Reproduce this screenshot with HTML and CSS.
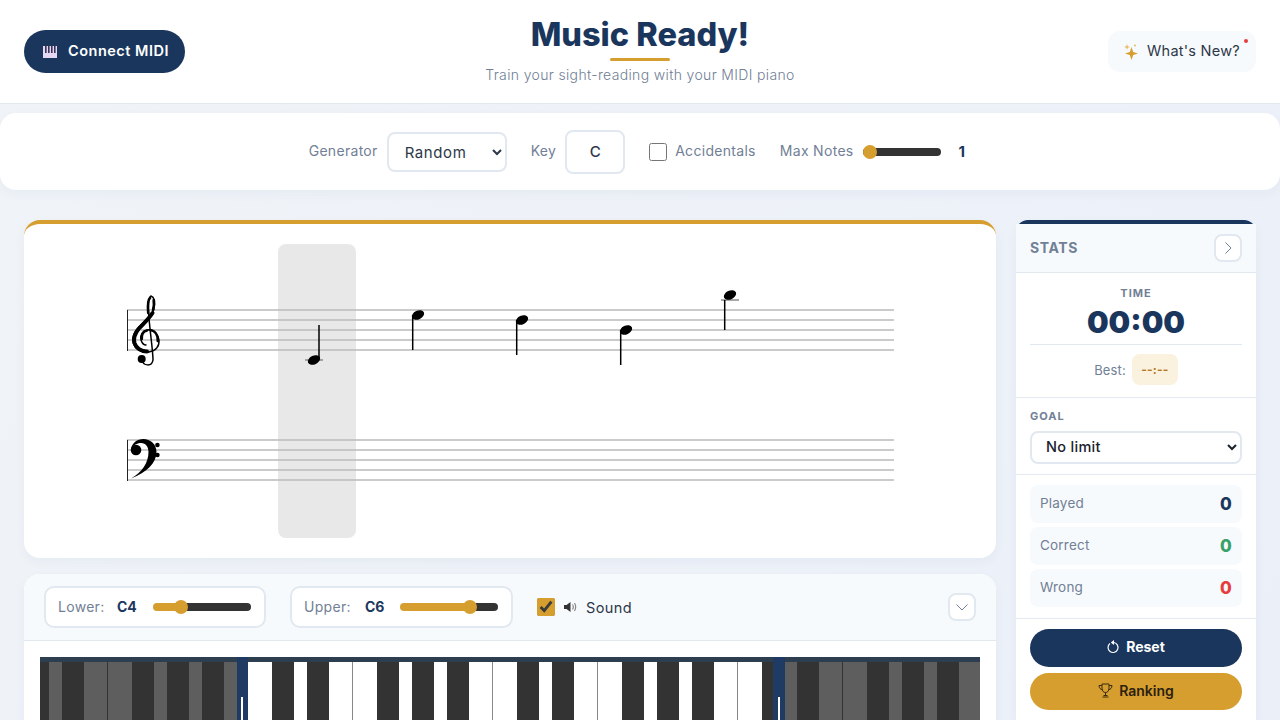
FILE: index.html
```html
<!DOCTYPE html>
<html lang="en">
<head>
    <meta charset="UTF-8">
    <title>Music Ready!</title>
    <link rel="stylesheet" href="styles.css">
</head>
<body>
    <header class="header">
        <div class="header-left">
            <button class="btn-midi">
                <svg class="midi-icon" width="14" height="12" viewBox="0 0 14 12">
                    <rect width="14" height="12" fill="#e6d8f2"/>
                    <rect x="2" y="0" width="1.6" height="7" fill="#3a3358"/>
                    <rect x="5" y="0" width="1.6" height="7" fill="#3a3358"/>
                    <rect x="8" y="0" width="1.6" height="7" fill="#3a3358"/>
                    <rect x="11" y="0" width="1.6" height="7" fill="#3a3358"/>
                </svg>
                <span>Connect MIDI</span>
            </button>
        </div>
        <div class="brand">
            <h1>Music Ready!</h1>
            <div class="brand-line"></div>
            <p>Train your sight-reading with your MIDI piano</p>
        </div>
        <div class="header-right">
            <button class="btn-news">
                <svg width="15" height="17" viewBox="0 0 15 17">
                    <path d="M7.500 4 L9.200 9 L14 10.500 L9.200 12 L7.500 17 L5.800 12 L1 10.500 L5.800 9 Z" fill="#d69e2e"/>
                    <path d="M3 1 L3.700 3.300 L6 4 L3.700 4.700 L3 7 L2.300 4.700 L0 4 L2.300 3.300 Z" fill="#e3b95c"/>
                    <circle cx="11" cy="2.500" r="1" fill="#e3b95c"/>
                </svg>
                <span>What's New?</span>
                <span class="news-dot"></span>
            </button>
        </div>
    </header>

    <section class="toolbar">
        <div class="tool">
            <label for="generator">Generator</label>
            <select id="generator" class="select-gen"><option>Random</option></select>
        </div>
        <div class="tool tool-key">
            <label for="key">Key</label>
            <input id="key" class="key-box" type="text" value="C">
        </div>
        <div class="tool tool-check">
            <input id="accidentals" type="checkbox">
            <label for="accidentals">Accidentals</label>
        </div>
        <div class="tool">
            <label for="maxNotes">Max Notes</label>
            <input id="maxNotes" class="slider slider-notes" type="range" min="1" max="10" value="1">
            <span class="tool-value">1</span>
        </div>
    </section>

    <main class="main">
        <div class="left-col">
            <section class="score-card">
                <svg class="score" width="972" height="334" viewBox="24 224 972 334">
                    <rect x="278" y="244" width="78" height="294" rx="8" fill="#000" fill-opacity="0.09"/>
                    <g class="staff-lines">
                        <path d="M127 310H894M127 320H894M127 330H894M127 340H894M127 350H894"/>
                        <path d="M127 440H894M127 450H894M127 460H894M127 470H894M127 480H894"/>
                    </g>
                    <path class="ledger" d="M305 360H323M721 300H739"/>
                    <path class="bar" d="M127.500 310V351M127.500 440V481"/>

                    <!-- treble clef -->
                    <g class="clef">
                        <path class="thin" d="M142 360C143 366 152 367 153 360C153 350 149 325 148.500 311C148 303 149 297 151 296C154.500 297 155 303 154 309C152 316 144 322 139 327C134 332 132 337 133 342C135 350 143 353 149 352C156 351 159.500 346 159 340C158 333 152 329 147 330C142 331 140 336 141 340C142 343 144 345 146 345"/>
                        <path class="thick" d="M152.500 313C148 320 142 325 138.500 329C134.500 334 133.500 339 134.500 343C136 348 141 351.500 147 351.500"/>
                        <path class="mid" d="M147 330.500C143 331 141.300 335 141.800 339M150 330C155 330.500 158 335 157.800 341"/>
                        <path class="mid" d="M150 298C147.500 300 147.700 307 148.200 313M153.700 300C154.300 304 154 307 153 310"/>
                        <circle cx="141.700" cy="359" r="4"/>
                    </g>

                    <!-- bass clef -->
                    <g class="clef-fill">
                        <path d="M131 478.500C147 472 156.500 463 156.500 452C156.500 444 150 439 143.500 439C137 439 132 443 131 449C134 444.500 138 443 141 443C146 443 148.500 447 148.500 452C148.500 463 142 472 131 478.500Z"/>
                        <circle cx="136" cy="450" r="5.300"/>
                        <circle cx="157.400" cy="445" r="2.300"/>
                        <circle cx="157.400" cy="455" r="2.300"/>
                    </g>

                    <!-- notes -->
                    <g class="notes">
                        <path class="stem" d="M319 325V358M412.700 315V350M516.700 320V355M620.700 330V365M724.700 300V330"/>
                        <ellipse cx="314" cy="360" rx="6.500" ry="4.300" transform="rotate(-25 314 360)"/>
                        <ellipse cx="418" cy="315" rx="6.500" ry="4.300" transform="rotate(-25 418 315)"/>
                        <ellipse cx="522" cy="320" rx="6.500" ry="4.300" transform="rotate(-25 522 320)"/>
                        <ellipse cx="626" cy="330" rx="6.500" ry="4.300" transform="rotate(-25 626 330)"/>
                        <ellipse cx="730" cy="295" rx="6.500" ry="4.300" transform="rotate(-25 730 295)"/>
                    </g>
                </svg>
            </section>

            <section class="piano-card">
                <div class="piano-head">
                    <div class="range-box">
                        <span class="range-label">Lower:</span>
                        <span class="range-value">C4</span>
                        <input class="slider" type="range" min="0" max="100" value="25" style="background: linear-gradient(to right, #d69e2e 29%, #333 29%)">
                    </div>
                    <div class="range-box range-upper">
                        <span class="range-label">Upper:</span>
                        <span class="range-value">C6</span>
                        <input class="slider" type="range" min="0" max="100" value="75" style="background: linear-gradient(to right, #d69e2e 71%, #333 71%)">
                    </div>
                    <label class="sound">
                        <input type="checkbox" checked>
                        <svg width="13" height="12" viewBox="0 0 13 12">
                            <path d="M0 4H2.500L6.500 1V11L2.500 8H0Z" fill="#333"/>
                            <path d="M8.500 3.500C9.500 5 9.500 7 8.500 8.500M10.500 2C12 4.500 12 7.500 10.500 10" fill="none" stroke="#888" stroke-width="1.200"/>
                        </svg>
                        <span>Sound</span>
                    </label>
                    <button class="chevron chevron-push">
                        <svg width="14" height="14" viewBox="0 0 14 14"><path d="M1.500 4.500L7 10L12.500 4.500"/></svg>
                    </button>
                </div>
                <div class="piano-body">
                    <svg width="940" height="70" viewBox="40 657 940 70">
                        <rect x="40" y="657" width="940" height="70" fill="#fff"/>
                        <!-- dim keys outside the selected range -->
                        <rect x="40" y="657" width="208" height="70" fill="#5e5e5e"/>
                        <rect x="773" y="657" width="207" height="70" fill="#5e5e5e"/>
                        <path class="key-line" d="M352.500 662V727M492.500 662V727M597.500 662V727M737.500 662V727"/>
                        <path class="key-line-dim" d="M107.500 662V727M842.500 662V727"/>
                        <g fill="#333">
                            <rect x="40" y="657" width="9" height="70"/>
                            <rect x="62" y="657" width="22" height="70"/>
                            <rect x="132" y="657" width="22" height="70"/>
                            <rect x="167" y="657" width="22" height="70"/>
                            <rect x="202" y="657" width="22" height="70"/>
                            <rect x="272" y="657" width="22" height="70"/>
                            <rect x="307" y="657" width="22" height="70"/>
                            <rect x="377" y="657" width="22" height="70"/>
                            <rect x="412" y="657" width="22" height="70"/>
                            <rect x="447" y="657" width="22" height="70"/>
                            <rect x="517" y="657" width="22" height="70"/>
                            <rect x="552" y="657" width="22" height="70"/>
                            <rect x="622" y="657" width="22" height="70"/>
                            <rect x="657" y="657" width="22" height="70"/>
                            <rect x="692" y="657" width="22" height="70"/>
                            <rect x="762" y="657" width="22" height="70"/>
                            <rect x="797" y="657" width="22" height="70"/>
                            <rect x="867" y="657" width="22" height="70"/>
                            <rect x="902" y="657" width="22" height="70"/>
                            <rect x="937" y="657" width="22" height="70"/>
                        </g>
                        <rect x="40" y="657" width="940" height="5" fill="#2c3e50"/>
                        <rect x="237" y="657" width="11" height="70" fill="#1f3a63"/>
                        <rect x="773" y="657" width="12" height="70" fill="#1f3a63"/>
                        <rect x="241" y="697" width="2" height="30" fill="#fff"/>
                        <rect x="778" y="697" width="2" height="30" fill="#fff"/>
                    </svg>
                </div>
            </section>
        </div>

        <aside class="stats">
            <div class="stats-head">
                <span>STATS</span>
                <button class="chevron">
                    <svg width="14" height="14" viewBox="0 0 14 14"><path d="M4.500 1.500L10 7L4.500 12.500"/></svg>
                </button>
            </div>
            <div class="stats-time">
                <div class="small-title">TIME</div>
                <div class="timer">00:00</div>
                <div class="best">
                    <span>Best:</span>
                    <span class="best-pill">--:--</span>
                </div>
            </div>
            <div class="stats-goal">
                <div class="small-title">GOAL</div>
                <select class="select-goal"><option>No limit</option></select>
            </div>
            <div class="stats-rows">
                <div class="stat-row"><span>Played</span><strong>0</strong></div>
                <div class="stat-row"><span>Correct</span><strong class="good">0</strong></div>
                <div class="stat-row"><span>Wrong</span><strong class="bad">0</strong></div>
            </div>
            <div class="stats-actions">
                <button class="btn-reset">
                    <svg width="13" height="14" viewBox="0 0 13 14">
                        <path d="M3 3.500A5 5 0 1 0 6.500 2.500" fill="none" stroke="#fff" stroke-width="1.200"/>
                        <path d="M7 0L7 5L3.800 2.500Z" fill="#fff"/>
                    </svg>
                    Reset
                </button>
                <button class="btn-rank">
                    <svg width="15" height="15" viewBox="0 0 15 15" fill="none" stroke="#3a2c10" stroke-width="1">
                        <path d="M4 1H11V5C11 8 9.500 9.500 7.500 9.500C5.500 9.500 4 8 4 5Z"/>
                        <path d="M4 2.500H1C1 5 2.500 6.500 4.500 6.800M11 2.500H14C14 5 12.500 6.500 10.500 6.800"/>
                        <path d="M7.500 9.500V12M4.500 14H10.500M5.500 12.500H9.500"/>
                    </svg>
                    Ranking
                </button>
            </div>
        </aside>
    </main>
</body>
</html>
```

FILE: styles.css
```css
* {
    box-sizing: border-box;
}

html, body {
    height: 720px;
    overflow: hidden;
}

body {
    margin: 0;
    font-family: Inter, 'Noto Sans', sans-serif;
    background: linear-gradient(120deg, #f0f4f8, #ebeff8);
    color: #1a202c;
}

button {
    font-family: inherit;
    border: none;
    cursor: pointer;
}

/* header */
.header {
    display: grid;
    grid-template-columns: 1fr auto 1fr;
    align-items: center;
    height: 104px;
    padding: 0 24px;
    background: #fff;
    border-bottom: 1px solid #e2e8f0;
}

.btn-midi {
    display: inline-flex;
    align-items: center;
    gap: 11px;
    height: 43px;
    padding: 0 16px 0 19px;
    border-radius: 22px;
    background: #1a365d;
    color: #fff;
    font-size: 14.5px;
    font-weight: 600;
    letter-spacing: 0.5px;
}

.btn-midi span, .btn-news span {
    padding-bottom: 2px;
}

.brand {
    text-align: center;
    margin-top: -5px;
}

.brand h1 {
    margin: 0;
    padding-top: 1px;
    font-size: 32.5px;
    line-height: 40px;
    font-weight: 800;
    color: #1a365d;
}

.brand-line {
    width: 60px;
    height: 3px;
    margin: 3px auto 0;
    border-radius: 2px;
    background: #d69e2e;
}

.brand p {
    margin: 5px 0 0;
    font-size: 14px;
    line-height: 18px;
    font-weight: 300;
    letter-spacing: 0.35px;
    color: #718096;
}

.header-right {
    display: flex;
    justify-content: flex-end;
}

.btn-news {
    position: relative;
    display: inline-flex;
    align-items: center;
    gap: 8px;
    height: 41px;
    padding: 0 16px;
    border-radius: 12px;
    background: #f7fafc;
    color: #2d3748;
    font-size: 14.5px;
    letter-spacing: 0.25px;
}

.btn-news .news-dot {
    position: absolute;
    top: 8px;
    right: 8px;
    width: 4px;
    height: 4px;
    padding: 0;
    border-radius: 50%;
    background: #e53e3e;
}

/* toolbar */
.toolbar {
    display: flex;
    justify-content: center;
    align-items: center;
    gap: 24px;
    height: 77px;
    margin-top: 9px;
    padding-right: 6px;
    background: #fff;
    border-radius: 16px;
    box-shadow: 0 4px 12px rgba(26, 54, 93, 0.04);
}

.tool {
    display: flex;
    align-items: center;
    gap: 9px;
    font-size: 14px;
    letter-spacing: 0.3px;
    color: #718096;
}

.tool label {
    padding-bottom: 2px;
}

.tool-value {
    margin-left: 9px;
    font-weight: 700;
    font-size: 15px;
    color: #1a365d;
}

.tool-check {
    gap: 8px;
}

.tool-check input {
    width: 18px;
    height: 18px;
    margin: 0;
}

.select-gen {
    width: 120px;
    height: 40px;
    padding: 2px 12px 0;
    border: 2px solid #e2e8f0;
    border-radius: 8px;
    background: #fff;
    font-family: inherit;
    font-size: 15px;
    letter-spacing: 0.6px;
    color: #2d3748;
}

.key-box {
    width: 60px;
    height: 44px;
    border: 2px solid #e2e8f0;
    border-radius: 8px;
    text-align: center;
    font-family: inherit;
    font-size: 15px;
    font-weight: 500;
    color: #2d3748;
    outline: none;
}

.slider {
    -webkit-appearance: none;
    appearance: none;
    width: 98px;
    height: 8px;
    margin: 0;
    border-radius: 4px;
    background: #333;
    outline: none;
}

.slider::-webkit-slider-thumb {
    -webkit-appearance: none;
    width: 14px;
    height: 14px;
    border-radius: 50%;
    background: #d69e2e;
}

.slider-notes {
    width: 78px;
}

/* main area */
.main {
    display: flex;
    gap: 20px;
    padding: 30px 24px 0;
}

.left-col {
    display: flex;
    flex-direction: column;
    gap: 16px;
    width: 972px;
}

.score-card {
    height: 338px;
    background: #fff;
    border-top: 4px solid #d69e2e;
    border-radius: 16px;
    box-shadow: 0 4px 12px rgba(26, 54, 93, 0.04);
    overflow: hidden;
}

.score {
    display: block;
}

.staff-lines path {
    fill: none;
    stroke: #bbb;
    stroke-width: 1.5;
}

.ledger {
    fill: none;
    stroke: #8c8c8c;
    stroke-width: 1.5;
}

.bar {
    stroke: #222;
    stroke-width: 1;
    fill: none;
}

.clef path {
    fill: none;
    stroke: #000;
    stroke-linecap: round;
}

.clef .thin {
    stroke-width: 1.5;
}

.clef .thick {
    stroke-width: 4;
}

.clef .mid {
    stroke-width: 2.6;
}

.notes .stem {
    fill: none;
    stroke: #000;
    stroke-width: 1.5;
}

.piano-card {
    height: 200px;
    background: #fff;
    border-radius: 16px;
    box-shadow: 0 4px 12px rgba(26, 54, 93, 0.04);
    overflow: hidden;
}

.piano-head {
    display: flex;
    align-items: center;
    gap: 24px;
    height: 67px;
    padding: 0 20px;
    background: #f7fafc;
    border-bottom: 1px solid #e2e8f0;
}

.range-box {
    display: flex;
    align-items: center;
    height: 42px;
    padding: 0 13px 0 12px;
    background: #fff;
    border: 2px solid #e2e8f0;
    border-radius: 10px;
    font-size: 14px;
}

.range-label {
    width: 59px;
    padding-bottom: 2px;
    letter-spacing: 0.3px;
    color: #718096;
}

.range-value {
    width: 36px;
    padding-bottom: 2px;
    font-weight: 700;
    color: #1a365d;
}

.range-upper .range-label {
    width: 61px;
}

.range-upper .range-value {
    width: 35px;
}

.sound {
    display: flex;
    align-items: center;
    gap: 9px;
    font-size: 14.5px;
    letter-spacing: 0.4px;
    color: #2d3748;
}

.sound input {
    width: 18px;
    height: 18px;
    margin: 0;
    accent-color: #d69e2e;
}

.chevron {
    display: flex;
    align-items: center;
    justify-content: center;
    width: 28px;
    height: 28px;
    padding: 0;
    background: #fff;
    border: 2px solid #e2e8f0;
    border-radius: 8px;
}

.chevron path {
    fill: none;
    stroke: #718096;
    stroke-width: 1;
}

.chevron-push {
    margin-left: auto;
}

.piano-body {
    padding: 16px;
}

.piano-body svg {
    display: block;
}

.key-line {
    stroke: #888;
    stroke-width: 1;
}

.key-line-dim {
    stroke: #333;
    stroke-width: 1;
}

/* stats panel */
.stats {
    width: 240px;
    height: 500px;
    background: #fff;
    border-top: 4px solid #1a365d;
    border-radius: 12px 12px 0 0;
    box-shadow: 0 4px 12px rgba(26, 54, 93, 0.04);
}

.stats-head {
    display: flex;
    justify-content: space-between;
    align-items: center;
    height: 49px;
    padding: 0 14px;
    background: #f7fafc;
    border-bottom: 1px solid #e2e8f0;
    font-size: 14px;
    font-weight: 700;
    letter-spacing: 0.6px;
    color: #718096;
}

.stats-head span {
    padding-bottom: 2px;
}

.stats-time {
    height: 125px;
    padding: 13px 14px 0;
    text-align: center;
    border-bottom: 1px solid #e2e8f0;
}

.small-title {
    font-size: 11px;
    line-height: 14px;
    font-weight: 700;
    letter-spacing: 1px;
    color: #718096;
}

.timer {
    height: 45px;
    padding-top: 3px;
    font-size: 30.5px;
    line-height: 38px;
    font-weight: 900;
    color: #1a365d;
    border-bottom: 1px solid #e2e8f0;
}

.best {
    display: flex;
    justify-content: center;
    align-items: center;
    gap: 6px;
    margin-top: 9px;
    font-size: 13px;
    letter-spacing: 0.15px;
    color: #718096;
}

.best-pill {
    display: flex;
    align-items: center;
    justify-content: center;
    width: 46px;
    height: 31px;
    border-radius: 8px;
    background: #faf1df;
    color: #b7791f;
    font-size: 12px;
    font-weight: 700;
}

.stats-goal {
    height: 77px;
    padding: 11px 14px 0;
    border-bottom: 1px solid #e2e8f0;
}

.select-goal {
    width: 100%;
    height: 33px;
    margin-top: 8px;
    padding: 0 10px 2px;
    border: 2px solid #e2e8f0;
    border-radius: 8px;
    background: #fff;
    font-family: inherit;
    font-size: 14.5px;
    font-weight: 500;
    letter-spacing: 0.3px;
    color: #1a202c;
}

.stats-rows {
    display: flex;
    flex-direction: column;
    gap: 4px;
    height: 144px;
    padding: 10px 14px 0;
    border-bottom: 1px solid #e2e8f0;
}

.stat-row {
    display: flex;
    justify-content: space-between;
    align-items: center;
    height: 38px;
    padding: 0 10px;
    border-radius: 8px;
    background: #f7fafc;
    font-size: 13.5px;
    letter-spacing: 0.2px;
    color: #718096;
}

.stat-row span {
    padding-bottom: 2px;
}

.stat-row strong {
    font-size: 17px;
    font-weight: 800;
    color: #1a365d;
}

.stat-row .good {
    color: #38a169;
}

.stat-row .bad {
    color: #e53e3e;
}

.stats-actions {
    display: flex;
    flex-direction: column;
    gap: 6px;
    padding: 10px 14px;
}

.stats-actions button {
    display: flex;
    align-items: center;
    justify-content: center;
    gap: 6px;
    height: 38px;
    padding: 0 0 3px;
    border-radius: 19px;
    font-size: 14px;
    font-weight: 700;
}

.stats-actions .btn-rank {
    height: 37px;
    background: #d69e2e;
    color: #2b2110;
    font-weight: 600;
}

.btn-reset {
    background: #1a365d;
    color: #fff;
}
```
